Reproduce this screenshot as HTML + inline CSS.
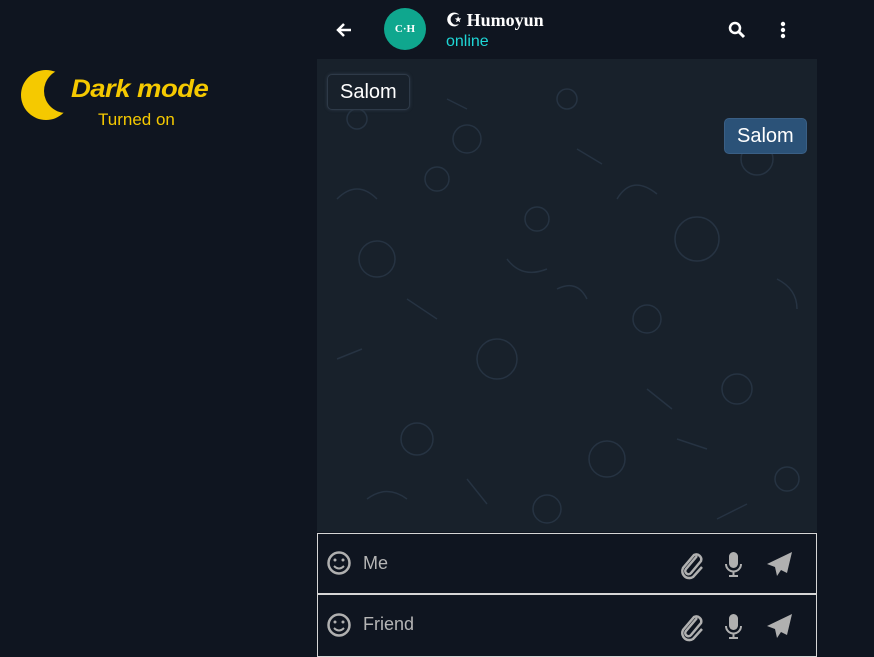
<!DOCTYPE html>
<html><head><style>
body{margin:0;width:874px;height:655px;background:#0f1520;font-family:"Liberation Sans",sans-serif;position:relative;overflow:hidden}
.a{position:absolute}
.chat{left:317px;top:59px;width:500px;height:473px;background:#18212b}
.msg{font-size:20px;color:#fff;padding:0 12px;height:34px;line-height:34px;border-radius:5px}
.inp{left:317px;width:498px;height:59px;border:1px solid #d6d6d6;background:#0f1520}
.inp span{position:absolute;left:45px;top:19px;font-size:18px;color:#b5b5b5}
</style></head><body>
<svg class="a" style="left:0;top:60px" width="80" height="70"><defs><mask id="m"><rect width="80" height="70" fill="#fff"/><circle cx="66" cy="31" r="22" fill="#000"/></mask></defs><circle cx="46" cy="35" r="25" fill="#f5c900" mask="url(#m)"/></svg>
<div class="a" style="left:71px;top:75px;font:italic bold 25px 'Liberation Sans',sans-serif;color:#f5c900;letter-spacing:-0.5px;transform:scaleX(1.1);transform-origin:left">Dark mode</div>
<div class="a" style="left:98px;top:110px;font-size:17px;color:#f5c900">Turned on</div>

<svg class="a" style="left:334px;top:21px" width="20" height="18" viewBox="0 0 20 18"><path d="M17 9H4M10 3L4 9l6 6" stroke="#fff" stroke-width="2.5" fill="none"/></svg>
<div class="a" style="left:384px;top:8px;width:42px;height:42px;border-radius:50%;background:#0fa78e;color:#fff;font:bold 11px 'Liberation Serif',serif;text-align:center;line-height:42px">C·H</div>
<div class="a" style="left:446px;top:10px;font:bold 18px 'Liberation Serif',serif;color:#fff">☪ Humoyun</div>
<div class="a" style="left:446px;top:33px;font-size:16px;color:#1ed6d6">online</div>
<svg class="a" style="left:728px;top:21px" width="18" height="18" viewBox="0 0 18 18"><circle cx="7" cy="7" r="5" stroke="#fff" stroke-width="2.5" fill="none"/><path d="M11 11l5 5" stroke="#fff" stroke-width="3"/></svg>
<svg class="a" style="left:779px;top:21px" width="8" height="18"><circle cx="4" cy="3" r="2.2" fill="#fff"/><circle cx="4" cy="9" r="2.2" fill="#fff"/><circle cx="4" cy="15" r="2.2" fill="#fff"/></svg>

<div class="a chat"></div>
<svg class="a" style="left:317px;top:59px" width="500" height="473" fill="none" stroke="#263342" stroke-width="1.5">
<circle cx="150" cy="80" r="14"/><circle cx="220" cy="160" r="12"/><circle cx="440" cy="100" r="16"/><circle cx="60" cy="200" r="18"/><circle cx="330" cy="260" r="14"/><circle cx="180" cy="300" r="20"/><circle cx="420" cy="330" r="15"/><circle cx="100" cy="380" r="16"/><circle cx="290" cy="400" r="18"/><circle cx="470" cy="420" r="12"/><circle cx="40" cy="60" r="10"/><circle cx="380" cy="180" r="22"/><circle cx="250" cy="40" r="10"/><circle cx="120" cy="120" r="12"/><circle cx="230" cy="450" r="14"/>
<path d="M130 40l20 10M260 90l25 15M20 140q20-20 40 0M300 140q15-25 40-5M90 240l30 20M240 230q20-10 30 10M20 300l25-10M360 380l30 10M50 440q20-15 40 0M150 420l20 25M400 460l30-15M460 220q20 10 20 30M190 200q15 20 40 10M330 330l25 20"/>
</svg>
<div class="a msg" style="left:327px;top:74px;background:#18212b;border:1px solid #2e3a48;box-shadow:0 0 3px #2e3a48">Salom</div>
<div class="a msg" style="left:724px;top:118px;background:#2b5278;border:1px solid #3a5f85">Salom</div>

<div class="a inp" style="top:533px"><span>Me</span></div>
<div class="a inp" style="top:594px;height:61px"><span>Friend</span></div>
<svg class="a" style="left:0;top:0" width="874" height="655" fill="none" stroke="#b0b0b0">
<g stroke-width="2.5"><circle cx="339" cy="563" r="10.5"/><circle cx="339" cy="625" r="10.5"/></g>
<g fill="#b0b0b0" stroke="none"><circle cx="335" cy="560" r="1.5"/><circle cx="343" cy="560" r="1.5"/><circle cx="335" cy="622" r="1.5"/><circle cx="343" cy="622" r="1.5"/></g>
<path d="M334 566q5 5 10 0M334 628q5 5 10 0" stroke-width="2"/>
<path d="M697 556l-11 13a3 3 0 0 0 5 4l10-12a5 5 0 0 0-7-6l-11 13a7 7 0 0 0 10 9l9-10" stroke-width="2.5"/>
<path d="M697 618l-11 13a3 3 0 0 0 5 4l10-12a5 5 0 0 0-7-6l-11 13a7 7 0 0 0 10 9l9-10" stroke-width="2.5"/>
<g fill="#b0b0b0" stroke="none"><rect x="729" y="552" width="9" height="16" rx="4.5"/><rect x="729" y="614" width="9" height="16" rx="4.5"/>
<path d="M792 552l-25 12 8 3 2 9 4-6 6 3z"/><path d="M792 614l-25 12 8 3 2 9 4-6 6 3z"/></g>
<path d="M726 564a7.5 7.5 0 0 0 15 0M733.5 572v4M729 576h9M726 626a7.5 7.5 0 0 0 15 0M733.5 634v4M729 638h9" stroke-width="2"/>
</svg>
</body></html>
